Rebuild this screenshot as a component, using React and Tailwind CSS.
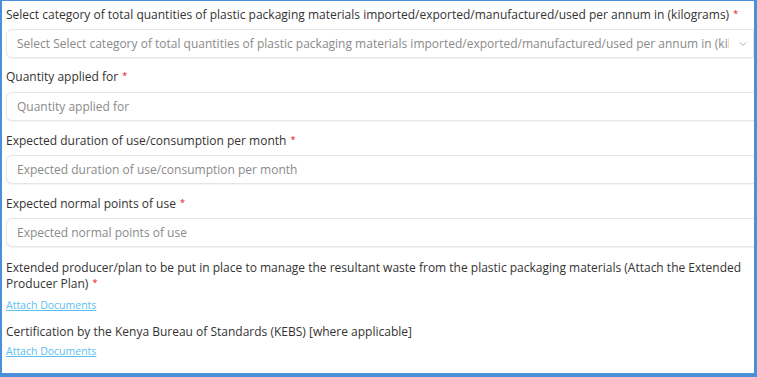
import { ChevronDown } from 'lucide-react'

const FONT = { fontFamily: '"Open Sans", "DejaVu Sans", sans-serif' }

function Label({ children, required }) {
    return (
        <p className="text-[12px] leading-[16px] text-[#333]">
            {children}
            {required && <span className="relative -top-[2px] text-red-600 text-[9px] leading-none ml-1">*</span>}
        </p>
    )
}

function TextInput({ placeholder }) {
    return (
        <input
            placeholder={placeholder}
            className="block w-full h-[29px] px-[10px] border border-[#e6e6e6] border-r-0 rounded-l-md bg-white text-[12px] text-[#333] placeholder:text-[#8a8a8a] shadow-[0_1px_1px_rgba(0,0,0,0.05)] focus:outline-none"
        />
    )
}

function AttachLink() {
    return (
        <a href="#" className="block w-fit text-[10.5px] leading-[12px] text-[#5bc0f0] underline">Attach Documents</a>
    )
}

export default function App() {
    return (
        <div className="w-[757px] h-[377px] bg-[#4a90d9] pl-[2px] pt-[1px] pr-[3px] pb-[4px]" style={FONT}>
            <div className="h-full bg-white pl-[4px] overflow-hidden flex flex-col">
                <div className="pt-[6px]">
                    <Label required>Select category of total quantities of plastic packaging materials imported/exported/manufactured/used per annum in (kilograms)</Label>
                </div>
                <div className="mt-[6px] h-[29px] shrink-0 flex items-center justify-between pl-[10px] pr-[4px] border border-[#e6e6e6] rounded-l-md bg-white shadow-[0_1px_1px_rgba(0,0,0,0.05)]">
                    <span className="text-[12px] text-[#8a8a8a] whitespace-nowrap overflow-hidden">Select Select category of total quantities of plastic packaging materials imported/exported/manufactured/used per annum in (kilograms)</span>
                    <ChevronDown className="w-3 h-3 text-[#999] shrink-0 ml-2" strokeWidth={1.5} />
                </div>

                <div className="mt-[11px]"><Label required>Quantity applied for</Label></div>
                <div className="mt-[7px]"><TextInput placeholder="Quantity applied for" /></div>

                <div className="mt-[12px]"><Label required>Expected duration of use/consumption per month</Label></div>
                <div className="mt-[6px]"><TextInput placeholder="Expected duration of use/consumption per month" /></div>

                <div className="mt-[12px]"><Label required>Expected normal points of use</Label></div>
                <div className="mt-[6px]"><TextInput placeholder="Expected normal points of use" /></div>

                <div className="mt-[13px]">
                    <Label required>Extended producer/plan to be put in place to manage the resultant waste from the plastic packaging materials (Attach the Extended Producer Plan)</Label>
                </div>
                <div className="mt-[7px]"><AttachLink /></div>

                <div className="mt-[13px]"><Label>Certification by the Kenya Bureau of Standards (KEBS) [where applicable]</Label></div>
                <div className="mt-[5px]"><AttachLink /></div>
            </div>
        </div>
    )
}
